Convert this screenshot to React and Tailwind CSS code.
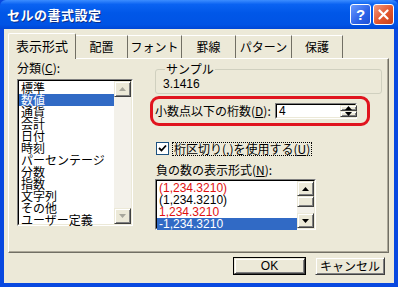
import React from 'react';

const ui = "font-['MS_UI_Gothic','Noto_Sans_CJK_JP','Noto_Sans_CJK_SC',sans-serif]";

const raised =
  'bg-[#ECE9D8] border border-t-[#ECE9D8] border-l-[#ECE9D8] border-r-[#404040] border-b-[#404040] shadow-[inset_1px_1px_0_#ffffff,inset_-1px_-1px_0_#808080]';

const Arrow = ({ up, color = '#000' }) => (
  <svg width="7" height="4" viewBox="0 0 7 4">
    {up ? <path d="M3.5 0 L7 4 L0 4 Z" fill={color} /> : <path d="M0 0 L7 0 L3.5 4 Z" fill={color} />}
  </svg>
);

const ScrollBtn = ({ up, disabled, h = 'h-[16px]' }) => (
  <div className={`${raised} w-[17px] ${h} flex items-center justify-center`}>
    <Arrow up={up} color={disabled ? '#A7A69B' : '#000'} />
  </div>
);

const Tab = ({ label, active, w }) =>
  active ? (
    <div
      className={`${w} h-[26px] -mb-[1px] relative z-10 bg-[#ECE9D8] border-t border-l border-white border-r border-r-[#716F64] rounded-t-[2px] flex items-center justify-center text-[13px] pb-[2px]`}
    >
      {label}
    </div>
  ) : (
    <div
      className={`${w} h-[23px] bg-[#ECE9D8] border-t border-white border-r border-r-[#716F64] flex items-center justify-center text-[12px]`}
    >
      {label}
    </div>
  );

const Sunken = ({ className, children }) => (
  <div className={`border border-t-[#808080] border-l-[#808080] border-r-white border-b-white ${className}`}>
    <div className="w-full h-full border border-t-black border-l-black border-r-[#ECE9D8] border-b-[#ECE9D8] bg-white flex">
      {children}
    </div>
  </div>
);

const U = ({ children }) => <span className="underline underline-offset-1">{children}</span>;

const categories = ['標準', '数値', '通貨', '会計', '日付', '時刻', 'パーセンテージ', '分数', '指数', '文字列', 'その他', 'ユーザー定義'];

const negatives = [
  { t: '(1,234.3210)', red: true },
  { t: '(1,234.3210)', red: false },
  { t: '1,234.3210', red: true },
  { t: '-1,234.3210', sel: true },
];

export default function App() {
  return (
    <div className={`w-[398px] h-[287px] flex flex-col bg-[#0848E0] ${ui} text-[12px] text-black`}>
      {/* title bar */}
      <div className="h-[29px] shrink-0 flex items-center pl-[7px] pr-[4px] bg-[linear-gradient(180deg,#3C8DFF_0%,#0A63F2_15%,#0057E8_45%,#0053E5_85%,#0046D6_100%)] rounded-t-[6px]">
        <span className="text-white font-bold text-[13px] tracking-[0.5px] [text-shadow:1px_1px_0_#0A2E8C]">セルの書式設定</span>
        <div className="ml-auto flex gap-[2px]">
          <div className="w-[21px] h-[21px] rounded-[3px] border border-white bg-[linear-gradient(135deg,#6A9BFF,#2C62E8_60%,#1D4FD6)] flex items-center justify-center text-white font-bold text-[15px] leading-none font-['Liberation_Sans',sans-serif]">
            ?
          </div>
          <div className="w-[21px] h-[21px] rounded-[3px] border border-white bg-[linear-gradient(135deg,#F29A80,#E2552D_55%,#C6401A)] flex items-center justify-center">
            <svg width="11" height="11" viewBox="0 0 11 11">
              <path d="M1.5 1.5 L9.5 9.5 M9.5 1.5 L1.5 9.5" stroke="#fff" strokeWidth="2.2" strokeLinecap="round" />
            </svg>
          </div>
        </div>
      </div>

      {/* body */}
      <div className="flex-1 mx-[4px] mb-[4px] bg-[#ECE9D8] flex flex-col pt-[4px] pl-[4px] pr-[5px]">
        {/* tabs */}
        <div className="h-[25px] flex items-end">
          <Tab label="表示形式" active w="w-[68px]" />
          <Tab label="配置" w="w-[52px]" />
          <Tab label="フォント" w="w-[54px]" />
          <Tab label="罫線" w="w-[54px]" />
          <Tab label="パターン" w="w-[56px]" />
          <Tab label="保護" w="w-[51px]" />
        </div>

        {/* panel */}
        <div className="h-[195px] border border-t-white border-l-white border-r-[#716F64] border-b-[#716F64] shadow-[inset_-1px_-1px_0_#ACA899] flex">
          {/* left column */}
          <div className="ml-[8px] mt-[2px] w-[116px] flex flex-col">
            <div className="h-[14px] leading-[14px]">
              分類(<U>C</U>):
            </div>
            <Sunken className="mt-[4px] h-[147px] w-[116px]">
              <div className="flex-1 flex flex-col pt-[1px]">
                {categories.map((c, i) => (
                  <div
                    key={c}
                    className={`h-[12px] leading-[12px] pl-[2px] whitespace-nowrap ${i === 1 ? 'bg-[#316AC5] text-white' : ''}`}
                  >
                    {c}
                  </div>
                ))}
              </div>
              <div className="w-[17px] flex flex-col bg-[#F3F1EA]">
                <ScrollBtn up disabled />
                <div className="flex-1" />
                <ScrollBtn disabled />
              </div>
            </Sunken>
          </div>

          {/* right column */}
          <div className="ml-[17px] mt-[3px] flex flex-col">
            <fieldset className="ml-[5px] w-[227px] h-[32px] border border-[#D0D0BF] rounded-[3px] pl-[7px] pt-[1px]">
              <legend className="ml-[2px] px-[1px] leading-[14px] h-[14px]">サンプル</legend>
              <div className="leading-[14px] h-[14px] font-['Liberation_Sans',sans-serif] text-[12px]">3.1416</div>
            </fieldset>

            <div className="mt-[2px] w-[220px] h-[30px] border-[3px] border-[#E0141E] rounded-[9px] flex items-center pl-[2px]">
              <span className="whitespace-nowrap leading-[14px]">
                小数点以下の桁数(<U>D</U>):
              </span>
              <Sunken className="ml-auto mr-[10px] w-[82px] h-[16px]">
                <div className="flex-1 pl-[2px] leading-[12px] font-['Liberation_Sans',sans-serif]">4</div>
                <div className="w-[15px] flex flex-col">
                  <ScrollBtn up h="h-[7px]" />
                  <ScrollBtn h="h-[7px]" />
                </div>
              </Sunken>
            </div>

            <div className="mt-[16px] ml-[6px] h-[13px] flex items-center">
              <div className="w-[13px] h-[13px] border border-[#1C5180] bg-white flex items-center justify-center">
                <svg width="9" height="9" viewBox="0 0 9 9">
                  <path d="M1 4 L3.5 6.5 L8 1.5" stroke="#000" strokeWidth="1.8" fill="none" />
                </svg>
              </div>
              <span className="ml-[3px] px-[1px] border border-dotted border-black leading-[12px] whitespace-nowrap">
                桁区切り(,)を使用する(<U>U</U>)
              </span>
            </div>

            <div className="mt-[8px] ml-[6px] leading-[14px] h-[14px]">
              負の数の表示形式(<U>N</U>):
            </div>

            <Sunken className="mt-[2px] ml-[5px] w-[161px] h-[51px]">
              <div className="flex-1 flex flex-col pt-[1px] font-['Liberation_Sans',sans-serif] text-[12px]">
                {negatives.map((n, i) => (
                  <div
                    key={i}
                    className={`h-[12px] leading-[12px] pl-[2px] ${n.sel ? 'bg-[#316AC5] text-white' : n.red ? 'text-[#E01010]' : ''}`}
                  >
                    {n.t}
                  </div>
                ))}
              </div>
              <div className="w-[17px] flex flex-col bg-[#F3F1EA]">
                <ScrollBtn up h="h-[15px]" />
                <div className={`${raised} h-[11px]`} />
                <div className="flex-1" />
                <ScrollBtn h="h-[15px]" />
              </div>
            </Sunken>
          </div>
        </div>

        {/* buttons */}
        <div className="mt-[4px] flex justify-end gap-[9px] pr-[4px]">
          <div className="w-[73px] h-[18px] border border-black flex">
            <div className={`${raised} flex-1 flex items-center justify-center leading-none font-['Liberation_Sans',sans-serif]`}>OK</div>
          </div>
          <div className={`${raised} w-[70px] h-[18px] flex items-center justify-center leading-none`}>キャンセル</div>
        </div>
      </div>
    </div>
  );
}
